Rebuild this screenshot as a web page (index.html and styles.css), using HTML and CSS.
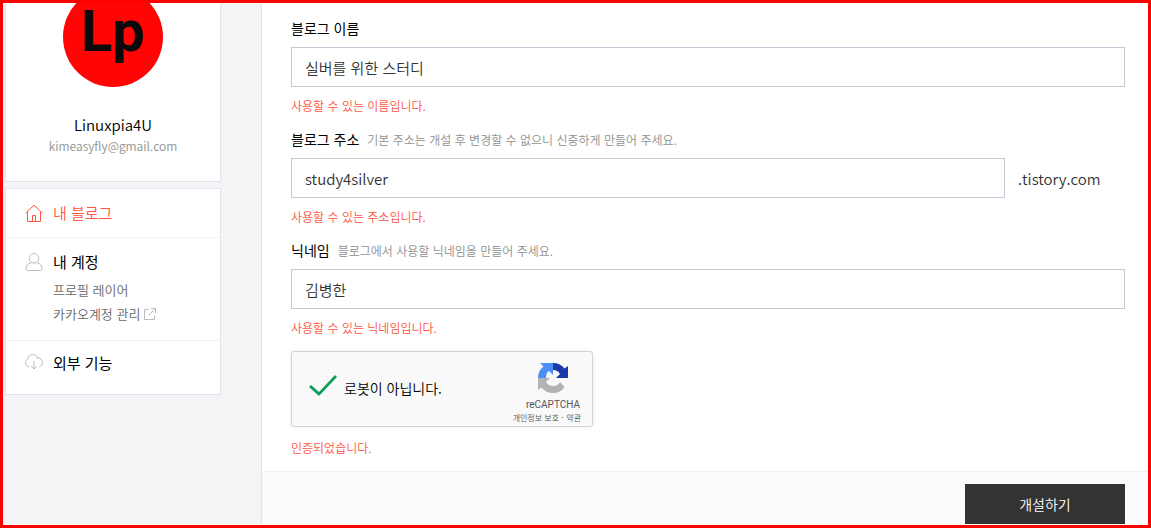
FILE: index.html
```html
<!DOCTYPE html>
<html lang="ko">
<head>
<meta charset="utf-8">
<meta name="viewport" content="width=device-width, initial-scale=1">
<title>블로그 개설</title>
<link rel="stylesheet" href="styles.css">
</head>
<body>
<div class="page">
  <aside class="sidebar">
    <section class="profile">
      <div class="avatar">Lp</div>
      <strong class="profile-name">Linuxpia4U</strong>
      <span class="profile-mail">kimeasyfly@gmail.com</span>
    </section>
    <nav class="menu">
      <div class="menu-item">
        <a class="menu-link active" href="#">
          <svg class="menu-icon" viewBox="0 0 18 18" aria-hidden="true"><path d="M.5 9 9 1.200 17.500 9M2.500 8v9.500h13V8M7.500 17v-5.500h3V17"/></svg>
          내 블로그
        </a>
      </div>
      <div class="menu-item">
        <a class="menu-link" href="#">
          <svg class="menu-icon" viewBox="0 0 18 18" aria-hidden="true"><circle cx="9" cy="5.300" r="4.800"/><path d="M5.900 9.800C2.800 10.700 1 12.600 1 15.500c0 1.500.4 2 1.500 2h13c1.100 0 1.500-.5 1.500-2 0-2.900-1.800-4.800-4.900-5.700"/></svg>
          내 계정
        </a>
        <ul class="submenu">
          <li><a href="#">프로필 레이어</a></li>
          <li><a href="#">카카오계정 관리<svg class="out-icon" viewBox="0 0 12 12" aria-hidden="true"><path d="M4.500 1.500h-4v10h10v-4M7 .5h4.500V5M11.500.5 4.500 7.500"/></svg></a></li>
        </ul>
      </div>
      <div class="menu-item">
        <a class="menu-link" href="#">
          <svg class="menu-icon" viewBox="0 0 18 18" aria-hidden="true"><path d="M4.300 12.800C2 12.400.5 10.800.5 8.600c0-1.600.8-2.900 2.100-3.700C3 2.300 5.200.6 7.700.6c2.300 0 4.200 1.300 5 3.200-.6.100-1.100.3-1.600.7M12.700 3.800c2.700 0 4.800 2.100 4.800 4.700 0 2.200-1.200 3.800-3 4.300M9 7v8M6.300 12.300 9 15l2.700-2.700"/></svg>
          외부 기능
        </a>
      </div>
    </nav>
  </aside>
  <form class="content">
    <div class="fields">
      <div class="field">
        <div class="field-head"><label for="blog-name">블로그 이름</label></div>
        <input class="text-box" id="blog-name" type="text" value="실버를 위한 스터디">
        <p class="message">사용할 수 있는 이름입니다.</p>
      </div>
      <div class="field">
        <div class="field-head"><label for="blog-url">블로그 주소</label><span class="hint">기본 주소는 개설 후 변경할 수 없으니 신중하게 만들어 주세요.</span></div>
        <div class="url-row">
          <input class="text-box" id="blog-url" type="text" value="study4silver">
          <span class="domain">.tistory.com</span>
        </div>
        <p class="message">사용할 수 있는 주소입니다.</p>
      </div>
      <div class="field">
        <div class="field-head"><label for="nickname">닉네임</label><span class="hint">블로그에서 사용할 닉네임을 만들어 주세요.</span></div>
        <input class="text-box" id="nickname" type="text" value="김병한">
        <p class="message">사용할 수 있는 닉네임입니다.</p>
      </div>
      <div class="field">
        <div class="captcha">
          <input class="captcha-check" id="robot" type="checkbox" checked>
          <label class="captcha-label" for="robot">로봇이 아닙니다.</label>
          <div class="captcha-brand">
            <svg class="captcha-logo" viewBox="0 0 30 30" aria-hidden="true">
              <path fill="#1c3aa9" d="M15 0c5 0 9 2 11.500 5.500L30 3v12H18l4-4c-1.500-2.500-4-4-7-4z"/>
              <path fill="#4a90f5" d="M0 15C0 10 2 6 5.500 3.500L2 0h13v12l-4-4c-2.500 1.500-3 4-3 7z"/>
              <path fill="#b3b3b3" d="M0 15h12l-4 4c1.500 2.500 4 4 7 4 3.500 0 6-1.600 7-4l4.500 5C24 28 20 30 15 30 10 30 6 28 3.500 24.500L0 27z"/>
            </svg>
            <span class="captcha-name">reCAPTCHA</span>
            <span class="captcha-terms"><a href="#">개인정보 보호</a> - <a href="#">약관</a></span>
          </div>
        </div>
        <p class="message captcha-message">인증되었습니다.</p>
      </div>
    </div>
    <div class="actions"><button class="submit" type="button">개설하기</button></div>
  </form>
</div>
</body>
</html>
```
FILE: styles.css
```css
* { box-sizing: border-box; }
body {
  margin: 0;
  font-family: "Noto Sans CJK KR DemiLight", "Noto Sans CJK KR", sans-serif;
  font-weight: 350;
  font-size: 13px;
  line-height: 20px;
  color: #000;
}
a { color: inherit; text-decoration: none; }
p, ul { margin: 0; padding: 0; list-style: none; }

.page {
  display: flex;
  min-height: 100vh;
  border: 3px solid #f00;
  background: #f3f4f6;
}

.sidebar {
  flex: none;
  width: 258px;
  padding: 0 40px 0 2px;
  overflow: hidden;
}
.profile {
  display: flex;
  flex-direction: column;
  align-items: center;
  padding-bottom: 25px;
  border: 1px solid #e1e4ec;
  border-top: 0;
  background: #fff;
}
.avatar {
  width: 100px;
  height: 100px;
  margin: -16px 0 28px;
  border-radius: 50%;
  background: #ff0505;
  color: #0a0a0a;
  font: 700 58px/88px Roboto, sans-serif;
  text-align: center;
}
.profile-name { font-size: 15px; font-weight: 400; line-height: 20px; }
.profile-mail { color: #909090; font-size: 12px; line-height: 21px; }

.menu {
  margin-top: 6px;
  border: 1px solid #e1e4ec;
  background: #fff;
}
.menu-item { padding: 12px 19px; }
.menu-item + .menu-item { border-top: 1px solid #f1f2f5; }
.menu-item:last-child { padding: 10px 19px 19px; }
.menu-link {
  display: flex;
  align-items: center;
  gap: 10px;
  font-family: "Noto Sans CJK KR", sans-serif;
  font-size: 15px;
  font-weight: 400;
  line-height: 24px;
}
.menu-icon {
  width: 18px;
  height: 18px;
  fill: none;
  stroke: #bbb;
}
.menu-link.active { color: #ff5544; font-family: inherit; }
.active .menu-icon { stroke: #ff5544; }
.submenu {
  padding: 4px 0 2px 28px;
  color: #666;
  line-height: 24px;
}
.submenu a { display: flex; align-items: center; gap: 4px; }
.out-icon { width: 12px; height: 12px; fill: none; stroke: #bbb; }

.content {
  flex: 1;
  min-width: 0;
  border-left: 1px solid #e1e4ec;
  background: #fafbfd;
}
.fields {
  display: grid;
  gap: 13px;
  padding: 15px 23px 13px 29px;
  background: #fff;
}
.field-head { display: flex; margin-bottom: 9px; }
.field-head label {
  font-family: "Noto Sans CJK KR", sans-serif;
  font-size: 14px;
  font-weight: 400;
}
.hint { margin-left: 8px; padding-top: 1px; color: #909090; font-size: 12px; line-height: 19px; }
.text-box {
  display: block;
  width: 100%;
  height: 40px;
  padding: 0 13px;
  border: 1px solid #c3cad5;
  background: #fff;
  color: #333;
  font: inherit;
  font-size: 15px;
}
.url-row { display: flex; align-items: center; }
.url-row .text-box { flex: 1; min-width: 0; }
.domain { width: 120px; padding: 2px 0 0 13px; color: #333; font-size: 15px; }
.message { margin-top: 9px; color: #ff5544; font-size: 12px; }

.captcha {
  display: flex;
  align-items: center;
  width: 302px;
  height: 76px;
  padding: 0 11px 0 17px;
  border: 1px solid #d3d3d3;
  border-radius: 3px;
  background: #f9f9f9;
  box-shadow: 0 0 4px rgba(0, 0, 0, .08);
}
.captcha-check {
  appearance: none;
  width: 30px;
  height: 22px;
  margin: 0 5px 6px 0;
  background: #0f9d58;
  clip-path: polygon(0 12px, 2px 10px, 10px 17px, 26px 0, 28px 2px, 10px 21px);
}
.captcha-label { flex: 1; padding-bottom: 2px; font-size: 14px; }
.captcha-brand {
  display: flex;
  flex-direction: column;
  align-items: flex-end;
  padding-top: 8px;
  color: #555;
}
.captcha-logo { width: 30px; height: 30px; margin: 0 13px 5px 0; }
.captcha-name { padding-right: 1px; font: 400 10px/14px Roboto, sans-serif; }
.captcha-terms { font-size: 8px; font-weight: 400; line-height: 12px; }
.captcha-message { margin-top: 11px; }

.actions {
  display: flex;
  justify-content: flex-end;
  padding: 12px 23px 1px;
  border-top: 1px solid #f1f2f5;
}
.submit {
  width: 160px;
  height: 40px;
  padding: 0;
  border: 0;
  background: #333;
  color: #fff;
  font: inherit;
  font-size: 14px;
}
```
